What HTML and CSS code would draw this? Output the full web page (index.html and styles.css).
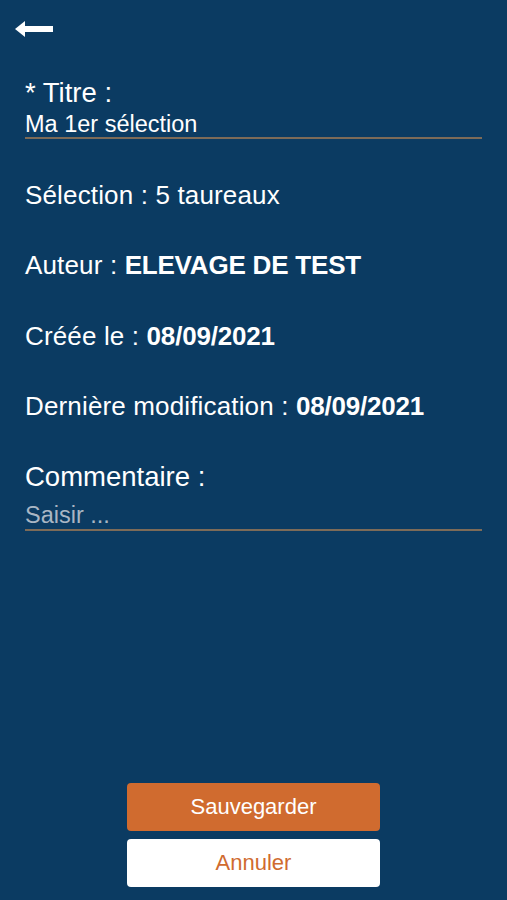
FILE: index.html
```html
<!DOCTYPE html>
<html lang="fr">
<head>
    <meta charset="UTF-8">
    <meta name="viewport" content="width=device-width, initial-scale=1.0">
    <title>Sélection</title>
    <link rel="stylesheet" href="styles.css">
</head>
<body>
    <div class="screen">
        <div class="topbar">
            <button class="back" aria-label="Retour">
                <svg width="38" height="16" viewBox="0 0 38 16">
                    <path d="M0 8 L10 0 L10 5 L38 5 L38 11 L10 11 L10 16 Z" fill="#fff"/>
                </svg>
            </button>
        </div>

        <div class="form">
            <div class="field">
                <label class="label-big">* Titre :</label>
                <input class="line-input" type="text" value="Ma 1er sélection">
            </div>

            <div class="info">Sélection : 5 taureaux</div>
            <div class="info">Auteur : <b>ELEVAGE DE TEST</b></div>
            <div class="info">Créée le : <b>08/09/2021</b></div>
            <div class="info">Dernière modification : <b>08/09/2021</b></div>

            <div class="field field-comment">
                <label class="label-big">Commentaire :</label>
                <input class="line-input" type="text" placeholder="Saisir ...">
            </div>
        </div>

        <div class="actions">
            <button class="btn btn-save">Sauvegarder</button>
            <button class="btn btn-cancel">Annuler</button>
        </div>
    </div>
</body>
</html>
```

FILE: styles.css
```css
body {
    margin: 0;
    background-color: #0b3b62;
    font-family: "Liberation Sans", Arial, sans-serif;
    color: #fff;
}
.screen {
    height: 900px;
    display: flex;
    flex-direction: column;
}
.topbar {
    padding: 21px 0 0 15px;
    height: 39px;
}
.back {
    background: none;
    border: none;
    padding: 0;
    cursor: pointer;
}
.form {
    padding: 0 25px;
    display: flex;
    flex-direction: column;
}
.field {
    display: flex;
    flex-direction: column;
}
.label-big {
    font-size: 27.5px;
    line-height: 30px;
    margin-top: 18px;
}
.line-input {
    background: transparent;
    border: none;
    border-bottom: 2px solid #7d6b58;
    color: #fff;
    font-family: inherit;
    font-size: 23.5px;
    padding: 3px 0 0 0;
    height: 31px;
    outline: none;
    box-sizing: border-box;
}
.line-input::placeholder {
    color: #a9b6c4;
}
.field-comment .line-input {
    margin-top: 8px;
}
.info {
    font-size: 26px;
    line-height: 30px;
    margin-top: 40.5px;
    letter-spacing: 0.15px;
}
.info:first-of-type {
    margin-top: 47px;
}
.info b {
    font-weight: bold;
    letter-spacing: -0.2px;
}
.info + .field .label-big {
    margin-top: 40.5px;
}
.actions {
    margin-top: auto;
    padding-bottom: 13px;
    display: flex;
    flex-direction: column;
    align-items: center;
    gap: 8px;
}
.btn {
    width: 253px;
    height: 48px;
    border: none;
    border-radius: 4px;
    font-family: inherit;
    font-size: 22px;
    cursor: pointer;
}
.btn-save {
    background-color: #d06b2f;
    color: #fff;
}
.btn-cancel {
    background-color: #fff;
    color: #d06b2f;
}
```
